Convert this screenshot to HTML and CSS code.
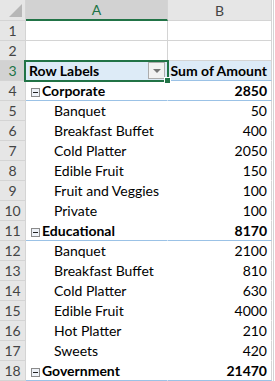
FILE: index.html
```html
<!DOCTYPE html>
<html lang="en">
<head>
    <meta charset="UTF-8">
    <title>Pivot Table</title>
    <link rel="stylesheet" href="styles.css">
</head>
<body>
    <div class="sheet">
        <table class="grid">
            <colgroup>
                <col class="c-rh">
                <col class="c-a">
                <col class="c-b">
            </colgroup>
            <thead>
                <tr>
                    <th class="corner"><span class="tri"></span></th>
                    <th class="colhead active">A</th>
                    <th class="colhead">B</th>
                </tr>
            </thead>
            <tbody>
                <tr><th class="rh">1</th><td></td><td></td></tr>
                <tr><th class="rh">2</th><td></td><td></td></tr>
                <tr class="hdr">
                    <th class="rh active">3</th>
                    <td class="sel">Row Labels<span class="drop"></span><span class="selbox"><span class="handle"></span></span></td>
                    <td class="num">Sum of Amount</td>
                </tr>
                <tr class="cat"><th class="rh">4</th><td><span class="minus"></span>Corporate</td><td class="num">2850</td></tr>
                <tr class="item"><th class="rh">5</th><td>Banquet</td><td class="num">50</td></tr>
                <tr class="item"><th class="rh">6</th><td>Breakfast Buffet</td><td class="num">400</td></tr>
                <tr class="item"><th class="rh">7</th><td>Cold Platter</td><td class="num">2050</td></tr>
                <tr class="item"><th class="rh">8</th><td>Edible Fruit</td><td class="num">150</td></tr>
                <tr class="item"><th class="rh">9</th><td>Fruit and Veggies</td><td class="num">100</td></tr>
                <tr class="item"><th class="rh">10</th><td>Private</td><td class="num">100</td></tr>
                <tr class="cat"><th class="rh">11</th><td><span class="minus"></span>Educational</td><td class="num">8170</td></tr>
                <tr class="item"><th class="rh">12</th><td>Banquet</td><td class="num">2100</td></tr>
                <tr class="item"><th class="rh">13</th><td>Breakfast Buffet</td><td class="num">810</td></tr>
                <tr class="item"><th class="rh">14</th><td>Cold Platter</td><td class="num">630</td></tr>
                <tr class="item"><th class="rh">15</th><td>Edible Fruit</td><td class="num">4000</td></tr>
                <tr class="item"><th class="rh">16</th><td>Hot Platter</td><td class="num">210</td></tr>
                <tr class="item"><th class="rh">17</th><td>Sweets</td><td class="num">420</td></tr>
                <tr class="cat"><th class="rh">18</th><td><span class="minus"></span>Government</td><td class="num">21470</td></tr>
            </tbody>
        </table>
    </div>
</body>
</html>
```

FILE: styles.css
```css
body { margin: 0; background: #fff; font-family: Lato, "Liberation Sans", sans-serif; font-size: 14px; color: #000; }
.sheet { width: 274px; height: 381px; border-right: 1px solid #d4d4d4; box-sizing: border-box; overflow: hidden; }

.grid { border-collapse: separate; border-spacing: 0; table-layout: fixed; width: 272px; }
.c-rh { width: 26px; }
.c-a { width: 142px; }
.c-b { width: 104px; }

.grid th, .grid td { box-sizing: border-box; padding: 0; height: 20px; border-right: 1px solid #d4d4d4; border-bottom: 1px solid #d4d4d4; white-space: nowrap; overflow: visible; line-height: 19px; }

thead th { height: 21px; background: #e6e6e6; font-weight: normal; color: #444; border-right-color: #bdbdbd; border-bottom: 1px solid #a9a9a9; line-height: 20px; }
.corner { position: relative; background: #e6e6e6; }
.tri { position: absolute; right: 3px; bottom: 3px; width: 0; height: 0; border-left: 13px solid transparent; border-bottom: 13px solid #b7b7b7; }
.colhead.active { background: #d2d2d2; color: #217346; border-bottom: 2px solid #217346; }

.rh { background: #e6e6e6; color: #444; font-weight: normal; text-align: center; border-right-color: #bdbdbd; border-bottom-color: #bdbdbd; }
.rh.active { background: #d2d2d2; color: #217346; }

td { padding-left: 3px !important; }
td.num { text-align: right; padding-right: 4px !important; padding-left: 0 !important; }

.hdr td { background: #ddebf7; font-weight: bold; border-bottom-color: #9bc2e6; }
.hdr td.sel { position: relative; border-right-color: #ddebf7; }
.cat td, .item td { border-bottom-color: #fff; }
.cat td:nth-child(2), .item td:nth-child(2) { border-right-color: #fff; }
.cat td { font-weight: bold; border-bottom-color: #9bc2e6; padding-left: 5px !important; }
.item td { padding-left: 28px !important; }

.minus { display: inline-block; width: 7px; height: 7px; border: 1px solid #8a8a8a; background: #eef2f8; margin-right: 2px; vertical-align: -1px; position: relative; }
.minus::after { content: ""; position: absolute; left: 1px; top: 3px; width: 5px; height: 1px; background: #222; }

.drop { position: absolute; right: 2px; top: 1px; width: 15px; height: 15px; border: 1px solid #acacac; background: #f2f2f2; }
.drop::after { content: ""; position: absolute; left: 4px; top: 6px; border-left: 4px solid transparent; border-right: 4px solid transparent; border-top: 4px solid #767676; }

.selbox { position: absolute; left: -2px; top: -1px; right: -2px; bottom: -2px; border: 2px solid #217346; pointer-events: none; }
.handle { position: absolute; right: -4px; bottom: -4px; width: 5px; height: 5px; background: #217346; border: 1px solid #fff; }
```
